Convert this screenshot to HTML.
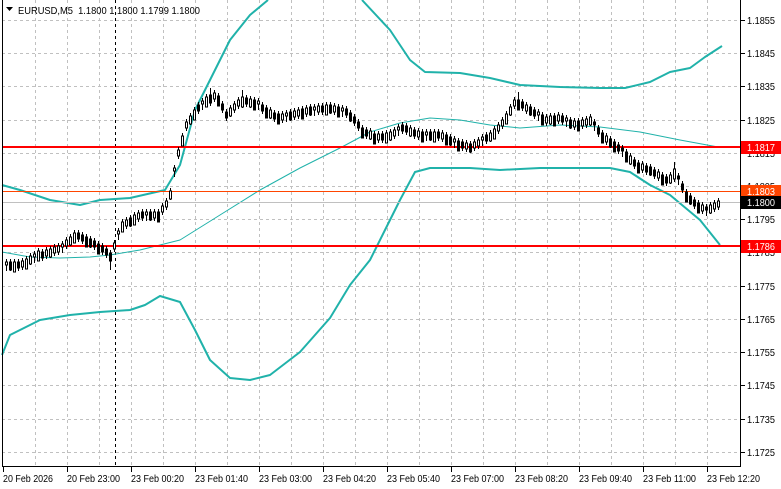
<!DOCTYPE html>
<html><head><meta charset="utf-8"><style>
html,body{margin:0;padding:0;background:#fff;width:781px;height:489px;overflow:hidden}
svg{display:block;font-family:"Liberation Sans",sans-serif;font-size:10.5px}
.g line{stroke:#c0c0c0;stroke-dasharray:3,3}
.c rect{width:2px;height:6px;stroke:#000;stroke-width:1}
.c rect:nth-child(3n){height:10px}
.c rect:nth-child(7n+1){height:3px}
.c rect:nth-child(5n+2){height:8px}
.c .w{fill:#fff}.c .b{fill:#000}
.band{fill:none;stroke:#20b2aa;stroke-width:2;stroke-linejoin:round}
</style></head><body>
<svg width="781" height="489" xmlns="http://www.w3.org/2000/svg">
<g class="g">
<line x1="35.5" y1="0" x2="35.5" y2="466"/><line x1="67.5" y1="0" x2="67.5" y2="466"/><line x1="99.5" y1="0" x2="99.5" y2="466"/><line x1="131.5" y1="0" x2="131.5" y2="466"/><line x1="163.5" y1="0" x2="163.5" y2="466"/><line x1="195.5" y1="0" x2="195.5" y2="466"/><line x1="227.5" y1="0" x2="227.5" y2="466"/><line x1="259.5" y1="0" x2="259.5" y2="466"/><line x1="291.5" y1="0" x2="291.5" y2="466"/><line x1="323.5" y1="0" x2="323.5" y2="466"/><line x1="355.5" y1="0" x2="355.5" y2="466"/><line x1="387.5" y1="0" x2="387.5" y2="466"/><line x1="419.5" y1="0" x2="419.5" y2="466"/><line x1="451.5" y1="0" x2="451.5" y2="466"/><line x1="483.5" y1="0" x2="483.5" y2="466"/><line x1="515.5" y1="0" x2="515.5" y2="466"/><line x1="547.5" y1="0" x2="547.5" y2="466"/><line x1="579.5" y1="0" x2="579.5" y2="466"/><line x1="611.5" y1="0" x2="611.5" y2="466"/><line x1="643.5" y1="0" x2="643.5" y2="466"/><line x1="675.5" y1="0" x2="675.5" y2="466"/><line x1="707.5" y1="0" x2="707.5" y2="466"/>
<line x1="2" y1="20.5" x2="740" y2="20.5"/><line x1="2" y1="53.5" x2="740" y2="53.5"/><line x1="2" y1="86.5" x2="740" y2="86.5"/><line x1="2" y1="120.5" x2="740" y2="120.5"/><line x1="2" y1="153.5" x2="740" y2="153.5"/><line x1="2" y1="186.5" x2="740" y2="186.5"/><line x1="2" y1="219.5" x2="740" y2="219.5"/><line x1="2" y1="252.5" x2="740" y2="252.5"/><line x1="2" y1="286.5" x2="740" y2="286.5"/><line x1="2" y1="319.5" x2="740" y2="319.5"/><line x1="2" y1="352.5" x2="740" y2="352.5"/><line x1="2" y1="385.5" x2="740" y2="385.5"/><line x1="2" y1="419.5" x2="740" y2="419.5"/><line x1="2" y1="452.5" x2="740" y2="452.5"/>
</g>
<line x1="115.5" y1="0" x2="115.5" y2="466" stroke="#000" stroke-dasharray="3,3"/>
<polyline class="band" points="2,185 20,190 50,200 80,205 100,200 130,198 165,190 180,165 195,110 210,80 230,40 250,15 268,0"/>
<polyline class="band" points="362,0 390,30 410,60 425,72 460,73 490,78 520,85 560,87 600,88 625,88 650,82 670,72 690,68 705,57 722,46"/>
<polyline class="band" points="2,355 10,335 40,320 70,315 100,312 130,310 145,305 160,296 180,302 195,330 210,360 230,378 250,380 270,375 300,352 330,318 350,285 370,260 385,230 400,200 415,172 430,168 470,168 500,170 540,168 580,168 610,168 630,172 650,185 670,195 700,220 720,245"/>
<polyline class="band" style="stroke-width:1" points="2,252 30,257 60,258 90,257 110,255 140,250 180,240 220,215 260,190 300,168 340,148 370,132 400,123 430,118 460,120 490,125 520,128 560,125 600,127 640,132 680,140 718,147"/>
<line x1="2" y1="202.5" x2="740" y2="202.5" stroke="#c0c0c0"/>
<line x1="2" y1="191.5" x2="740" y2="191.5" stroke="#ff4500"/>
<line x1="2" y1="147" x2="740" y2="147" stroke="#f00" stroke-width="2"/>
<line x1="2" y1="246" x2="740" y2="246" stroke="#f00" stroke-width="2"/>
<path stroke="#000" fill="none" d="M6.5 259v12M10.5 259v12M14.5 259v12M18.5 259v12M22.5 258v12M26.5 256v12M30.5 253v12M34.5 251v12M38.5 248v12M42.5 249v12M46.5 247v12M50.5 246v12M54.5 244v12M58.5 243v12M62.5 241v12M66.5 237v12M70.5 234v12M74.5 230v12M78.5 230v12M82.5 232v12M86.5 234v12M90.5 236v12M94.5 238v12M98.5 241v12M102.5 243v12M106.5 246v12M110.5 250v20M114.5 240v12M118.5 228v12M122.5 219v12M126.5 217v12M130.5 215v12M134.5 212v12M138.5 210v12M142.5 209v12M146.5 209v12M150.5 209v12M154.5 209v12M158.5 209v12M162.5 203v12M166.5 198v12M170.5 188v12M174.5 165v12M178.5 147v12M182.5 133v12M186.5 119v12M190.5 113v12M194.5 107v12M198.5 102v12M202.5 98v12M206.5 94v12M210.5 88v18M214.5 90v12M218.5 93v12M222.5 101v12M226.5 109v12M230.5 105v12M234.5 101v12M238.5 97v12M242.5 90v18M246.5 95v12M250.5 96v12M254.5 97v12M258.5 98v12M262.5 102v12M266.5 105v12M270.5 107v12M274.5 110v12M278.5 111v12M282.5 111v12M286.5 110v12M290.5 109v12M294.5 108v12M298.5 107v12M302.5 106v12M306.5 105v12M310.5 104v12M314.5 104v12M318.5 103v12M322.5 103v12M326.5 102v12M330.5 102v12M334.5 103v12M338.5 104v12M342.5 105v12M346.5 106v12M350.5 110v12M354.5 114v12M358.5 119v12M362.5 125v12M366.5 127v12M370.5 128v12M374.5 131v12M378.5 131v12M382.5 131v12M386.5 130v12M390.5 129v12M394.5 127v12M398.5 124v12M402.5 122v12M406.5 123v12M410.5 125v12M414.5 127v12M418.5 128v12M422.5 129v12M426.5 129v12M430.5 129v12M434.5 129v12M438.5 129v12M442.5 130v12M446.5 132v12M450.5 134v12M454.5 136v12M458.5 138v12M462.5 139v12M466.5 140v12M470.5 141v12M474.5 139v12M478.5 137v12M482.5 134v12M486.5 132v12M490.5 130v12M494.5 126v12M498.5 122v12M502.5 117v12M506.5 111v12M510.5 104v12M514.5 97v12M518.5 92v14M522.5 99v12M526.5 102v12M530.5 104v12M534.5 107v12M538.5 109v12M542.5 112v12M546.5 114v12M550.5 113v12M554.5 113v12M558.5 112v12M562.5 113v12M566.5 115v12M570.5 117v12M574.5 118v12M578.5 118v12M582.5 117v12M586.5 116v12M590.5 114v12M594.5 119v12M598.5 125v12M602.5 130v12M606.5 133v12M610.5 136v12M614.5 139v12M618.5 142v12M622.5 145v12M626.5 149v12M630.5 153v12M634.5 157v12M638.5 160v12M642.5 161v12M646.5 163v12M650.5 164v12M654.5 167v12M658.5 169v12M662.5 172v12M666.5 174v12M670.5 172v12M674.5 162v20M678.5 173v12M682.5 181v12M686.5 189v12M690.5 193v12M694.5 197v12M698.5 200v12M702.5 202v12M706.5 204v12M710.5 202v12M714.5 200v12M718.5 198v12"/>
<g class="c">
<rect class="w" x="5.5" y="262"/><rect class="b" x="9.5" y="262"/><rect class="w" x="13.5" y="262"/><rect class="b" x="17.5" y="262"/><rect class="w" x="21.5" y="261"/><rect class="w" x="25.5" y="259"/><rect class="w" x="29.5" y="256"/><rect class="w" x="33.5" y="254"/><rect class="w" x="37.5" y="251"/><rect class="b" x="41.5" y="252"/><rect class="w" x="45.5" y="250"/><rect class="w" x="49.5" y="249"/><rect class="w" x="53.5" y="247"/><rect class="w" x="57.5" y="246"/><rect class="w" x="61.5" y="244"/><rect class="w" x="65.5" y="240"/><rect class="w" x="69.5" y="237"/><rect class="w" x="73.5" y="233"/><rect class="b" x="77.5" y="233"/><rect class="b" x="81.5" y="235"/><rect class="b" x="85.5" y="237"/><rect class="b" x="89.5" y="239"/><rect class="b" x="93.5" y="241"/><rect class="b" x="97.5" y="244"/><rect class="b" x="101.5" y="246"/><rect class="b" x="105.5" y="249"/><rect class="b" x="109.5" y="253"/><rect class="w" x="113.5" y="243"/><rect class="w" x="117.5" y="231"/><rect class="w" x="121.5" y="222"/><rect class="w" x="125.5" y="220"/><rect class="b" x="129.5" y="218"/><rect class="w" x="133.5" y="215"/><rect class="w" x="137.5" y="213"/><rect class="b" x="141.5" y="212"/><rect class="w" x="145.5" y="212"/><rect class="b" x="149.5" y="212"/><rect class="w" x="153.5" y="212"/><rect class="b" x="157.5" y="212"/><rect class="w" x="161.5" y="206"/><rect class="w" x="165.5" y="201"/><rect class="w" x="169.5" y="191"/><rect class="w" x="173.5" y="168"/><rect class="w" x="177.5" y="150"/><rect class="w" x="181.5" y="136"/><rect class="w" x="185.5" y="122"/><rect class="w" x="189.5" y="116"/><rect class="w" x="193.5" y="110"/><rect class="b" x="197.5" y="105"/><rect class="w" x="201.5" y="101"/><rect class="w" x="205.5" y="97"/><rect class="b" x="209.5" y="95"/><rect class="w" x="213.5" y="93"/><rect class="b" x="217.5" y="96"/><rect class="b" x="221.5" y="104"/><rect class="b" x="225.5" y="112"/><rect class="w" x="229.5" y="108"/><rect class="w" x="233.5" y="104"/><rect class="w" x="237.5" y="100"/><rect class="w" x="241.5" y="97"/><rect class="b" x="245.5" y="98"/><rect class="w" x="249.5" y="99"/><rect class="b" x="253.5" y="100"/><rect class="w" x="257.5" y="101"/><rect class="b" x="261.5" y="105"/><rect class="b" x="265.5" y="108"/><rect class="w" x="269.5" y="110"/><rect class="b" x="273.5" y="113"/><rect class="b" x="277.5" y="114"/><rect class="w" x="281.5" y="114"/><rect class="w" x="285.5" y="113"/><rect class="b" x="289.5" y="112"/><rect class="w" x="293.5" y="111"/><rect class="w" x="297.5" y="110"/><rect class="b" x="301.5" y="109"/><rect class="w" x="305.5" y="108"/><rect class="b" x="309.5" y="107"/><rect class="w" x="313.5" y="107"/><rect class="w" x="317.5" y="106"/><rect class="b" x="321.5" y="106"/><rect class="w" x="325.5" y="105"/><rect class="b" x="329.5" y="105"/><rect class="w" x="333.5" y="106"/><rect class="b" x="337.5" y="107"/><rect class="w" x="341.5" y="108"/><rect class="b" x="345.5" y="109"/><rect class="b" x="349.5" y="113"/><rect class="b" x="353.5" y="117"/><rect class="b" x="357.5" y="122"/><rect class="b" x="361.5" y="128"/><rect class="b" x="365.5" y="130"/><rect class="w" x="369.5" y="131"/><rect class="b" x="373.5" y="134"/><rect class="w" x="377.5" y="134"/><rect class="b" x="381.5" y="134"/><rect class="w" x="385.5" y="133"/><rect class="w" x="389.5" y="132"/><rect class="w" x="393.5" y="130"/><rect class="w" x="397.5" y="127"/><rect class="b" x="401.5" y="125"/><rect class="b" x="405.5" y="126"/><rect class="w" x="409.5" y="128"/><rect class="b" x="413.5" y="130"/><rect class="w" x="417.5" y="131"/><rect class="b" x="421.5" y="132"/><rect class="w" x="425.5" y="132"/><rect class="b" x="429.5" y="132"/><rect class="w" x="433.5" y="132"/><rect class="b" x="437.5" y="132"/><rect class="w" x="441.5" y="133"/><rect class="b" x="445.5" y="135"/><rect class="b" x="449.5" y="137"/><rect class="w" x="453.5" y="139"/><rect class="b" x="457.5" y="141"/><rect class="b" x="461.5" y="142"/><rect class="w" x="465.5" y="143"/><rect class="b" x="469.5" y="144"/><rect class="w" x="473.5" y="142"/><rect class="w" x="477.5" y="140"/><rect class="w" x="481.5" y="137"/><rect class="b" x="485.5" y="135"/><rect class="w" x="489.5" y="133"/><rect class="w" x="493.5" y="129"/><rect class="w" x="497.5" y="125"/><rect class="w" x="501.5" y="120"/><rect class="w" x="505.5" y="114"/><rect class="w" x="509.5" y="107"/><rect class="w" x="513.5" y="100"/><rect class="b" x="517.5" y="100"/><rect class="b" x="521.5" y="102"/><rect class="w" x="525.5" y="105"/><rect class="b" x="529.5" y="107"/><rect class="b" x="533.5" y="110"/><rect class="w" x="537.5" y="112"/><rect class="b" x="541.5" y="115"/><rect class="w" x="545.5" y="117"/><rect class="w" x="549.5" y="116"/><rect class="b" x="553.5" y="116"/><rect class="w" x="557.5" y="115"/><rect class="b" x="561.5" y="116"/><rect class="w" x="565.5" y="118"/><rect class="b" x="569.5" y="120"/><rect class="w" x="573.5" y="121"/><rect class="b" x="577.5" y="121"/><rect class="w" x="581.5" y="120"/><rect class="w" x="585.5" y="119"/><rect class="w" x="589.5" y="117"/><rect class="b" x="593.5" y="122"/><rect class="b" x="597.5" y="128"/><rect class="b" x="601.5" y="133"/><rect class="w" x="605.5" y="136"/><rect class="b" x="609.5" y="139"/><rect class="b" x="613.5" y="142"/><rect class="b" x="617.5" y="145"/><rect class="b" x="621.5" y="148"/><rect class="b" x="625.5" y="152"/><rect class="w" x="629.5" y="156"/><rect class="b" x="633.5" y="160"/><rect class="b" x="637.5" y="163"/><rect class="w" x="641.5" y="164"/><rect class="b" x="645.5" y="166"/><rect class="b" x="649.5" y="167"/><rect class="b" x="653.5" y="170"/><rect class="w" x="657.5" y="172"/><rect class="b" x="661.5" y="175"/><rect class="b" x="665.5" y="177"/><rect class="w" x="669.5" y="175"/><rect class="w" x="673.5" y="169"/><rect class="b" x="677.5" y="176"/><rect class="b" x="681.5" y="184"/><rect class="b" x="685.5" y="192"/><rect class="b" x="689.5" y="196"/><rect class="b" x="693.5" y="200"/><rect class="b" x="697.5" y="203"/><rect class="w" x="701.5" y="205"/><rect class="b" x="705.5" y="207"/><rect class="w" x="709.5" y="205"/><rect class="w" x="713.5" y="203"/><rect class="w" x="717.5" y="201"/>
</g>
<rect x="741" y="0" width="40" height="489" fill="#fff"/>
<rect x="0" y="467" width="781" height="22" fill="#fff"/>
<line x1="2.5" y1="0" x2="2.5" y2="467" stroke="#000"/>
<line x1="740.5" y1="0" x2="740.5" y2="467" stroke="#000"/>
<line x1="2" y1="466.5" x2="741" y2="466.5" stroke="#000"/>
<g stroke="#000">
<line x1="741" y1="20.5" x2="745" y2="20.5"/><line x1="741" y1="53.5" x2="745" y2="53.5"/><line x1="741" y1="86.5" x2="745" y2="86.5"/><line x1="741" y1="120.5" x2="745" y2="120.5"/><line x1="741" y1="153.5" x2="745" y2="153.5"/><line x1="741" y1="186.5" x2="745" y2="186.5"/><line x1="741" y1="219.5" x2="745" y2="219.5"/><line x1="741" y1="252.5" x2="745" y2="252.5"/><line x1="741" y1="286.5" x2="745" y2="286.5"/><line x1="741" y1="319.5" x2="745" y2="319.5"/><line x1="741" y1="352.5" x2="745" y2="352.5"/><line x1="741" y1="385.5" x2="745" y2="385.5"/><line x1="741" y1="419.5" x2="745" y2="419.5"/><line x1="741" y1="452.5" x2="745" y2="452.5"/>
</g>
<g fill="#000" lengthAdjust="spacingAndGlyphs">
<text x="747" y="24" textLength="28" lengthAdjust="spacingAndGlyphs">1.1855</text><text x="747" y="57" textLength="28" lengthAdjust="spacingAndGlyphs">1.1845</text><text x="747" y="90" textLength="28" lengthAdjust="spacingAndGlyphs">1.1835</text><text x="747" y="124" textLength="28" lengthAdjust="spacingAndGlyphs">1.1825</text><text x="747" y="157" textLength="28" lengthAdjust="spacingAndGlyphs">1.1815</text><text x="747" y="190" textLength="28" lengthAdjust="spacingAndGlyphs">1.1805</text><text x="747" y="223" textLength="28" lengthAdjust="spacingAndGlyphs">1.1795</text><text x="747" y="256" textLength="28" lengthAdjust="spacingAndGlyphs">1.1785</text><text x="747" y="290" textLength="28" lengthAdjust="spacingAndGlyphs">1.1775</text><text x="747" y="323" textLength="28" lengthAdjust="spacingAndGlyphs">1.1765</text><text x="747" y="356" textLength="28" lengthAdjust="spacingAndGlyphs">1.1755</text><text x="747" y="389" textLength="28" lengthAdjust="spacingAndGlyphs">1.1745</text><text x="747" y="423" textLength="28" lengthAdjust="spacingAndGlyphs">1.1735</text><text x="747" y="456" textLength="28" lengthAdjust="spacingAndGlyphs">1.1725</text>
</g>
<rect x="741" y="141" width="40" height="13" fill="#f00"/><text x="747" y="151" fill="#fff" textLength="28" lengthAdjust="spacingAndGlyphs">1.1817</text>
<rect x="741" y="185" width="40" height="13" fill="#ff4500"/><text x="747" y="195" fill="#fff" textLength="28" lengthAdjust="spacingAndGlyphs">1.1803</text>
<rect x="741" y="196" width="40" height="13" fill="#000"/><text x="747" y="206" fill="#fff" textLength="28" lengthAdjust="spacingAndGlyphs">1.1800</text>
<rect x="741" y="240" width="40" height="13" fill="#f00"/><text x="747" y="250" fill="#fff" textLength="28" lengthAdjust="spacingAndGlyphs">1.1786</text>
<g stroke="#000">
<line x1="3.5" y1="467" x2="3.5" y2="472"/><line x1="67.5" y1="467" x2="67.5" y2="472"/><line x1="131.5" y1="467" x2="131.5" y2="472"/><line x1="195.5" y1="467" x2="195.5" y2="472"/><line x1="259.5" y1="467" x2="259.5" y2="472"/><line x1="323.5" y1="467" x2="323.5" y2="472"/><line x1="387.5" y1="467" x2="387.5" y2="472"/><line x1="451.5" y1="467" x2="451.5" y2="472"/><line x1="515.5" y1="467" x2="515.5" y2="472"/><line x1="579.5" y1="467" x2="579.5" y2="472"/><line x1="643.5" y1="467" x2="643.5" y2="472"/><line x1="707.5" y1="467" x2="707.5" y2="472"/>
</g>
<g fill="#000">
<text x="3" y="482" textLength="50" lengthAdjust="spacingAndGlyphs">20 Feb 2026</text><text x="67" y="482" textLength="53" lengthAdjust="spacingAndGlyphs">20 Feb 23:00</text><text x="131" y="482" textLength="53" lengthAdjust="spacingAndGlyphs">23 Feb 00:20</text><text x="195" y="482" textLength="53" lengthAdjust="spacingAndGlyphs">23 Feb 01:40</text><text x="259" y="482" textLength="53" lengthAdjust="spacingAndGlyphs">23 Feb 03:00</text><text x="323" y="482" textLength="53" lengthAdjust="spacingAndGlyphs">23 Feb 04:20</text><text x="387" y="482" textLength="53" lengthAdjust="spacingAndGlyphs">23 Feb 05:40</text><text x="451" y="482" textLength="53" lengthAdjust="spacingAndGlyphs">23 Feb 07:00</text><text x="515" y="482" textLength="53" lengthAdjust="spacingAndGlyphs">23 Feb 08:20</text><text x="579" y="482" textLength="53" lengthAdjust="spacingAndGlyphs">23 Feb 09:40</text><text x="643" y="482" textLength="53" lengthAdjust="spacingAndGlyphs">23 Feb 11:00</text><text x="707" y="482" textLength="53" lengthAdjust="spacingAndGlyphs">23 Feb 12:20</text>
</g>
<path d="M6,7 L13,7 L9.5,11 Z" fill="#000"/>
<text x="18" y="14" fill="#000" xml:space="preserve" textLength="182" lengthAdjust="spacingAndGlyphs">EURUSD,M5  1.1800 1.1800 1.1799 1.1800</text>
</svg>
</body></html>
